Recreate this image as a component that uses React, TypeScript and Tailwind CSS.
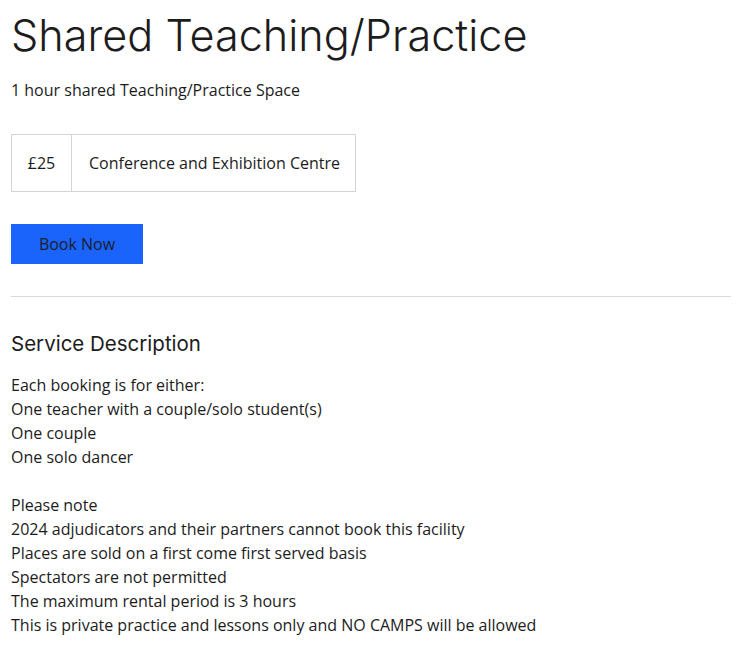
export default function App() {
  return (
    <div className="bg-white min-h-screen px-[11px] pt-[8px] text-[#1c1c1c]" style={{ fontFamily: '"Open Sans", sans-serif' }}>
      <h1 className="text-[43.2px] leading-[54px] font-light" style={{ fontFamily: 'Inter, sans-serif' }}>
        Shared Teaching/Practice
      </h1>
      <p className="mt-[16px] text-[16px] leading-[24px]">1 hour shared Teaching/Practice Space</p>
      <div className="mt-[32px] inline-flex border border-[#d5d5d5] h-[58px] items-center">
        <div className="w-[60px] h-full flex items-center justify-center border-r border-[#d5d5d5] text-[16px]">£25</div>
        <div className="pl-[17px] pr-[15px] text-[16px]">Conference and Exhibition Centre</div>
      </div>
      <div className="mt-[32px]">
        <button className="w-[132px] h-[40px] bg-[#1b64fb] text-[16px] text-[#1c1c2c]">Book Now</button>
      </div>
      <hr className="mt-[32px] border-t border-[#d9d9d9]" />
      <h2 className="mt-[33px] text-[20.5px] leading-[28px]" style={{ fontFamily: 'Inter, sans-serif' }}>Service Description</h2>
      <div className="mt-[15px] text-[16px] leading-[24px]">
        <p>Each booking is for either:</p>
        <p>One teacher with a couple/solo student(s)</p>
        <p>One couple</p>
        <p>One solo dancer</p>
        <p>&nbsp;</p>
        <p>Please note</p>
        <p>2024 adjudicators and their partners cannot book this facility</p>
        <p>Places are sold on a first come first served basis</p>
        <p>Spectators are not permitted</p>
        <p>The maximum rental period is 3 hours</p>
        <p>This is private practice and lessons only and NO CAMPS will be allowed</p>
      </div>
    </div>
  );
}
